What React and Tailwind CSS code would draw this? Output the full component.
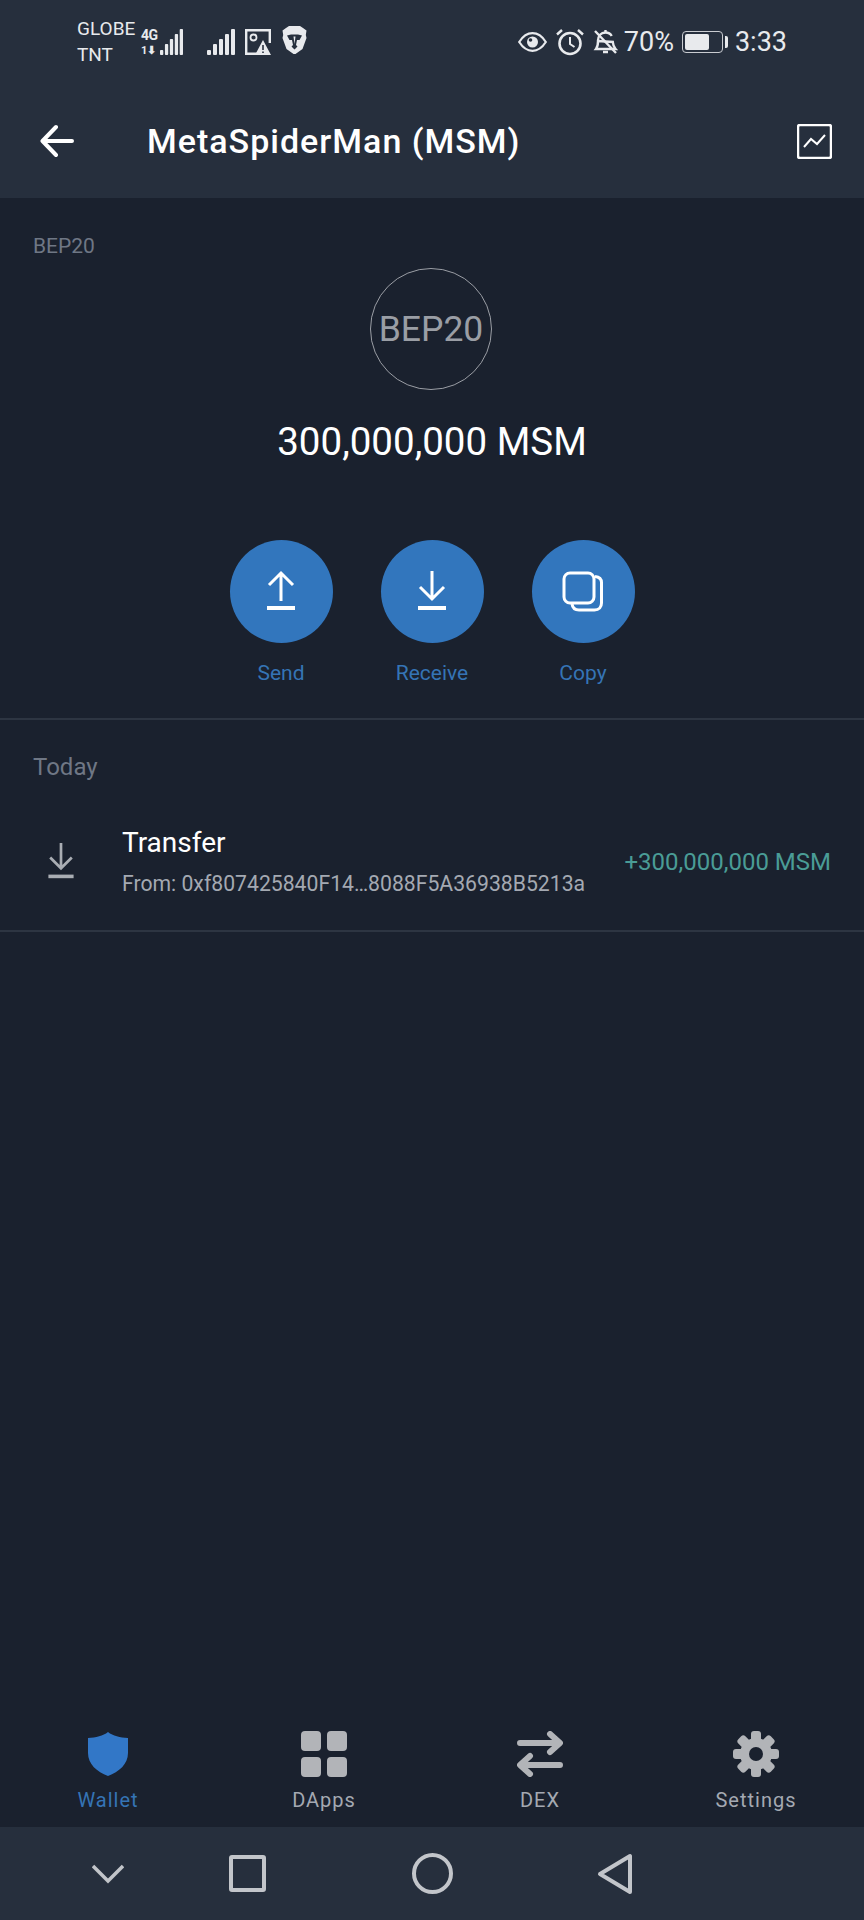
import React from 'react';

const Signal = ({ className, width = 28 }) => (
  <svg width={width} height="26" viewBox="0 0 28 26" preserveAspectRatio="none" className={className} fill="#e8eaed">
    <rect x="0" y="21" width="4" height="5" rx="1" />
    <rect x="6" y="15" width="4" height="11" rx="1" />
    <rect x="12" y="10" width="4" height="16" rx="1" />
    <rect x="18" y="5" width="4" height="21" rx="1" />
    <rect x="24" y="0" width="4" height="26" rx="1" />
  </svg>
);

const StatusBar = () => (
  <div className="h-[84px] flex items-start pl-[77px] pr-[77px] text-[#e8eaed]">
    <div className="mt-[16px] w-[63px] text-[19px] leading-[26px]">
      <div>GLOBE</div>
      <div>TNT</div>
    </div>
    <div className="relative mt-[29px] w-[43px] h-[26px]">
      <span className="absolute left-[1px] -top-[1px] text-[14px] leading-[14px] font-bold tracking-[-0.5px]">4G</span>
      <span className="absolute left-[1px] top-[16px] text-[11px] leading-[11px] font-bold">1⬇</span>
      <Signal className="absolute right-0 top-0" width={23} />
    </div>
    <Signal className="mt-[29px] ml-[24px]" />
    <svg width="26" height="26" viewBox="0 0 26 26" className="mt-[29px] ml-[10px]" fill="none" stroke="#e8eaed" strokeWidth="2.4">
      <path d="M12 24.800H1.200V1.200H24.800V14" />
      <circle cx="8.500" cy="8.500" r="3" strokeWidth="1.800" />
      <path d="M18 11L26 26H10Z" fill="#e8eaed" stroke="none" />
      <path d="M18 16v5M18 22.500v1.500" stroke="#262f3d" strokeWidth="1.600" />
    </svg>
    <svg width="25" height="30" viewBox="0 0 25 30" className="mt-[25px] ml-[11px]">
      <path d="M7 1H18L21 3L24.500 5.500L23.800 10L24.500 13L20.500 24L13.500 29H11.500L4.500 24L.5 13L1.200 10L.5 5.500L4 3Z" fill="#e8eaed" />
      <path d="M5 10.500L9 9.500H16L20 10.500L17.500 15H15L14 20L15.500 21.500L12.500 24.500L9.500 21.500L11 20L10 15H7.500Z" fill="#262f3d" />
      <path d="M11.500 11.500H13.500L12.500 19Z" fill="#e8eaed" />
    </svg>
    <div className="ml-auto mt-[29px] flex items-center h-[26px]">
      <svg width="29" height="20" viewBox="0 0 29 20" fill="none" stroke="#e8eaed" strokeWidth="2.2">
        <path d="M1.200 10C5 4 9.500 1.200 14.500 1.200S24 4 27.800 10C24 16 19.500 18.800 14.500 18.800S5 16 1.200 10Z" />
        <circle cx="14.500" cy="10" r="5.500" fill="#e8eaed" stroke="none" />
        <circle cx="12.500" cy="8" r="1.800" fill="#262f3d" stroke="none" />
      </svg>
      <svg width="28" height="28" viewBox="0 0 28 28" className="ml-[9px]" fill="none" stroke="#e8eaed" strokeWidth="2.6">
        <circle cx="14" cy="15.500" r="10.500" />
        <path d="M14 9v7l4.500 3" strokeWidth="2" />
        <path d="M1 6.500L6 2M27 6.500L22 2" strokeWidth="2.400" />
      </svg>
      <svg width="25" height="26" viewBox="0 0 25 26" className="ml-[9px]" fill="none" stroke="#e8eaed" strokeWidth="2.4">
        <path d="M5 12c0-5 3-8.500 7.500-8.500 3 0 5 1.300 6.200 3.500M19.800 13c.2 3 1 5 2.700 7H3c1.400-1.800 2-4 2-8Z" />
        <path d="M12.500 1v2.500M10 23h5M2 2l21 22" />
      </svg>
      <span className="ml-[6px] text-[27px] leading-[26px]">70%</span>
      <div className="ml-[8px] flex items-center">
        <div className="w-[41px] h-[22px] rounded-[4px] border border-[#c9ccd1] p-[2px]">
          <div className="w-[24px] h-full rounded-[2px] bg-[#e8eaed]" />
        </div>
        <div className="ml-[2px] w-[3px] h-[12px] rounded-r-[2px] bg-[#e8eaed]" />
      </div>
      <span className="ml-[7px] text-[27px] leading-[26px]">3:33</span>
    </div>
  </div>
);

const Header = () => (
  <div className="h-[114px] flex items-center pl-[40px] pr-[32px]">
    <svg width="34" height="34" viewBox="0 0 34 34" fill="none" stroke="#ffffff" strokeWidth="4" strokeLinecap="round" strokeLinejoin="round">
      <path d="M32 17H3M16 3L2.500 17L16 31" />
    </svg>
    <h1 className="ml-[73px] text-[34px] leading-[40px] font-medium tracking-[1px] text-white">MetaSpiderMan (MSM)</h1>
    <svg width="35" height="35" viewBox="0 0 35 35" className="ml-auto" fill="none" stroke="#ffffff">
      <rect x="1" y="1" width="33" height="33" rx="2" strokeWidth="2.500" />
      <path d="M7 23L14 15L20 20L28 11" strokeWidth="2" />
    </svg>
  </div>
);

const ActionButton = ({ label, children }) => (
  <div className="w-[103px] flex flex-col items-center">
    <div className="w-[103px] h-[103px] rounded-full bg-[#3276bd] flex items-center justify-center">
      {children}
    </div>
    <span className="mt-[18px] text-[21px] leading-[24px] text-[#3574b5]">{label}</span>
  </div>
);

const UpIcon = () => (
  <svg width="40" height="44" viewBox="0 0 40 44" fill="none" stroke="#ffffff" strokeWidth="3">
    <path d="M20 31V3M8 15L20 3L32 15" />
    <path d="M6 38H34" strokeWidth="4" />
  </svg>
);

const DownIcon = ({ stroke = '#ffffff', width = 40, height = 44 }) => (
  <svg width={width} height={height} viewBox="0 0 40 44" fill="none" stroke={stroke} strokeWidth="3">
    <path d="M20 1V29M8 17L20 29L32 17" />
    <path d="M6 38H34" strokeWidth="4" />
  </svg>
);

const CopyIcon = () => (
  <svg width="42" height="42" viewBox="0 0 42 42" fill="none" stroke="#ffffff" strokeWidth="3">
    <path d="M33 5.500c4 .5 6.500 2.500 6.500 6V32c0 4-2.500 7-7 7H17c-4 0-6.500-2.500-7-6" />
    <rect x="2" y="2" width="30" height="30" rx="6" />
  </svg>
);

const Shield = () => (
  <svg width="42" height="46" viewBox="0 0 42 46">
    <path d="M21 1C26 5 33 6.500 41 7V22C41 33 32 41 21 45C10 41 1 33 1 22V7C9 6.500 16 5 21 1Z" fill="#3277c7" />
  </svg>
);

const Grid = () => (
  <svg width="46" height="46" viewBox="0 0 46 46" fill="#b2b4b8">
    <rect x="0" y="0" width="20" height="20" rx="4" />
    <rect x="26" y="0" width="20" height="20" rx="4" />
    <rect x="0" y="26" width="20" height="20" rx="4" />
    <rect x="26" y="26" width="20" height="20" rx="4" />
  </svg>
);

const Swap = () => (
  <svg width="46" height="46" viewBox="0 0 46 46" fill="none" stroke="#b2b4b8" strokeWidth="6" strokeLinecap="round" strokeLinejoin="round">
    <path d="M3 12H42M33 3L43 12L33 21" />
    <path d="M43 34H4M13 25L3 34L13 43" />
  </svg>
);

const Gear = () => (
  <svg width="46" height="46" viewBox="0 0 46 46" fill="#b2b4b8">
    {[0, 45, 90, 135, 180, 225, 270, 315].map((a) => (
      <rect key={a} x="18" y="0" width="10" height="12" rx="3" transform={`rotate(${a} 23 23)`} />
    ))}
    <circle cx="23" cy="23" r="16" />
    <circle cx="23" cy="23" r="7" fill="#1a212e" />
  </svg>
);

const tabs = [
  { label: 'Wallet', icon: Shield, color: 'text-[#3574b5]' },
  { label: 'DApps', icon: Grid, color: 'text-[#a4a9b2]' },
  { label: 'DEX', icon: Swap, color: 'text-[#a4a9b2]' },
  { label: 'Settings', icon: Gear, color: 'text-[#a4a9b2]' },
];

const App = () => (
  <div className="w-[864px] h-[1920px] flex flex-col bg-[#1a212e] font-['Roboto',sans-serif]">
    <div className="bg-[#262f3d]">
      <StatusBar />
      <Header />
    </div>

    <main className="flex-1 flex flex-col">
      <p className="pt-[36px] pl-[33px] text-[21px] leading-[24px] text-[#6f7785]">BEP20</p>
      <div className="mt-[10px] ml-[370px] w-[122px] h-[122px] rounded-full border border-[#9a9ea5] flex items-center justify-center">
        <span className="text-[35.500px] leading-[40px] text-[#9a9ea5]">BEP20</span>
      </div>
      <p className="mt-[30px] text-center text-[38.500px] leading-[44px] text-white">300,000,000 MSM</p>

      <div className="mt-[76px] flex justify-center gap-[48px]">
        <ActionButton label="Send"><UpIcon /></ActionButton>
        <ActionButton label="Receive"><DownIcon /></ActionButton>
        <ActionButton label="Copy"><CopyIcon /></ActionButton>
      </div>

      <div className="mt-[33px] border-t-2 border-[#2d3542]" />

      <p className="mt-[35px] pl-[33px] text-[24px] leading-[24px] text-[#6f7785]">Today</p>

      <div className="pt-[49px] pb-[34px] pl-[43px] pr-[33px] flex items-center border-b-2 border-[#2d3542]">
        <DownIcon stroke="#a9adb3" width={36} height={40} />
        <div className="ml-[43px] flex flex-col gap-[14px]">
          <span className="text-[28px] leading-[30px] text-white">Transfer</span>
          <span className="text-[21.200px] leading-[24px] text-[#a4a9b2]">From: 0xf807425840F14…8088F5A36938B5213a</span>
        </div>
        <span className="ml-auto text-[24px] leading-[28px] text-[#4a9c96]">+300,000,000 MSM</span>
      </div>

      <nav className="mt-auto grid grid-cols-4 pb-[15px]">
        {tabs.map((tab) => (
          <div key={tab.label} className="flex flex-col items-center">
            <tab.icon />
            <span className={`mt-[11px] text-[20px] leading-[24px] tracking-[1px] ${tab.color}`}>{tab.label}</span>
          </div>
        ))}
      </nav>
    </main>

    <div className="h-[93px] bg-[#262f3d] flex items-center pl-[92px]">
      <svg width="32" height="20" viewBox="0 0 32 20" fill="none" stroke="#c2c5ca" strokeWidth="3.500">
        <path d="M1 2L16 17L31 2" />
      </svg>
      <div className="ml-[105px] w-[37px] h-[37px] rounded-[3px] border-[4px] border-[#c2c5ca]" />
      <div className="ml-[146px] w-[41px] h-[41px] rounded-full border-[4px] border-[#c2c5ca]" />
      <svg width="36" height="42" viewBox="0 0 36 42" className="ml-[144px]" fill="none" stroke="#c2c5ca" strokeWidth="4" strokeLinejoin="round">
        <path d="M33 3V39L3 21Z" />
      </svg>
    </div>
  </div>
);

export default App;
